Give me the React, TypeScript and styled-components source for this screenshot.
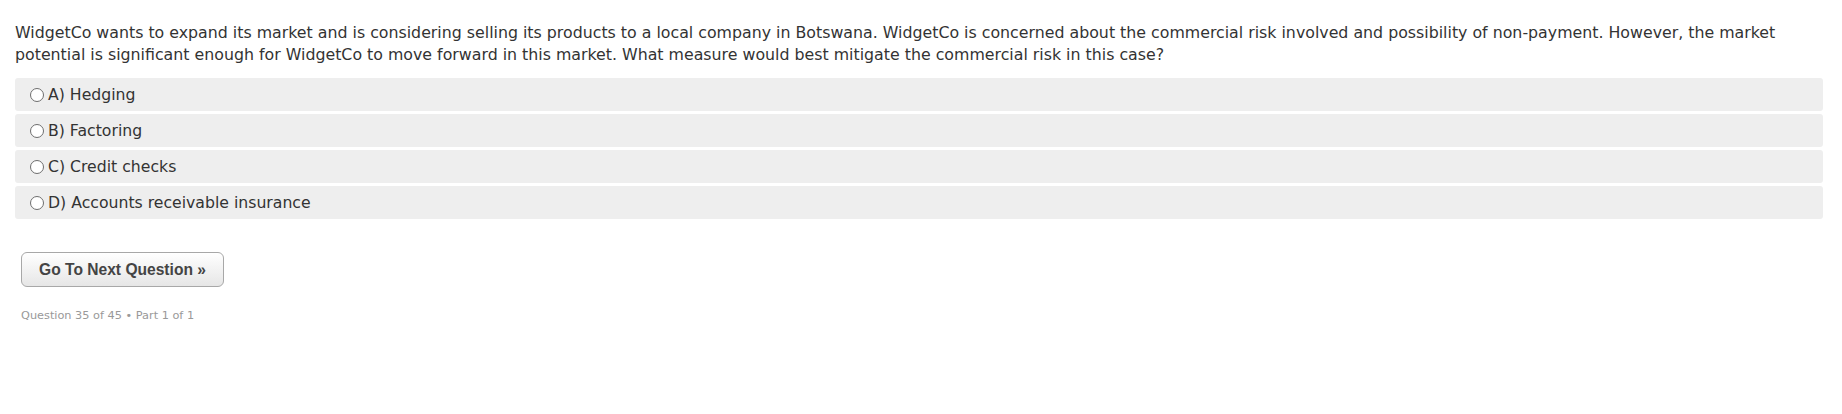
import React from 'react';
import styled, { createGlobalStyle } from 'styled-components';

const GlobalStyle = createGlobalStyle`
  html, body {
    margin: 0;
    padding: 0;
    background: #ffffff;
  }
`;

const Page = styled.div`
  padding: 22px 19px 0 15px;
  font-family: 'DejaVu Sans', Verdana, sans-serif;
  color: #333333;
`;

const QuestionText = styled.p`
  margin: 0 0 12px 0;
  font-size: 15.8px;
  line-height: 22px;
`;

const OptionList = styled.div`
  display: flex;
  flex-direction: column;
  gap: 3px;
`;

const OptionRow = styled.label`
  display: flex;
  align-items: center;
  height: 33px;
  padding: 0 0 0 15px;
  background: #eeeeee;
  border-radius: 3px;
  font-size: 15.7px;
  cursor: pointer;
`;

const Radio = styled.span`
  width: 12px;
  height: 12px;
  border: 1px solid #6e6e6e;
  border-radius: 50%;
  background: #ffffff;
  margin-right: 4px;
  flex-shrink: 0;
`;

const NextButton = styled.button`
  margin: 33px 0 0 6px;
  width: 203px;
  height: 35px;
  border: 1px solid #a8a8a8;
  border-radius: 6px;
  background: linear-gradient(#ffffff, #e6e6e6);
  font-family: 'Liberation Sans', Arial, sans-serif;
  font-weight: bold;
  font-size: 15.6px;
  color: #444444;
  cursor: pointer;
`;

const Footer = styled.div`
  margin: 22px 0 0 6px;
  font-size: 11.3px;
  color: #999999;
`;

const options = [
  'A) Hedging',
  'B) Factoring',
  'C) Credit checks',
  'D) Accounts receivable insurance',
];

export default function App() {
  return (
    <>
      <GlobalStyle />
      <Page>
        <QuestionText>
          WidgetCo wants to expand its market and is considering selling its products to a local company in Botswana. WidgetCo is concerned about the commercial risk involved and possibility of non-payment. However, the market potential is significant enough for WidgetCo to move forward in this market. What measure would best mitigate the commercial risk in this case?
        </QuestionText>
        <OptionList>
          {options.map((o) => (
            <OptionRow key={o}>
              <Radio />
              {o}
            </OptionRow>
          ))}
        </OptionList>
        <NextButton>Go To Next Question »</NextButton>
        <Footer>Question 35 of 45 • Part 1 of 1</Footer>
      </Page>
    </>
  );
}
